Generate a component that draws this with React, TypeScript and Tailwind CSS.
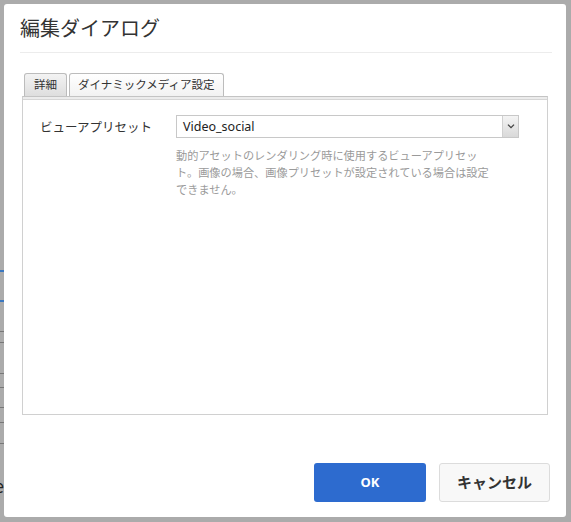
import React from "react";

const JP = { fontFamily: '"Noto Sans CJK JP", "Noto Sans", sans-serif' };

export default function App() {
  return (
    <div className="relative w-[571px] h-[522px] bg-[#ababab] overflow-hidden" style={JP}>
      {/* background page fragments peeking out on the left */}
      <div className="absolute left-0 top-[270px] w-[5px] h-[2px] bg-[#3b78c0]" />
      <div className="absolute left-0 top-[300px] w-[5px] h-[2px] bg-[#3b78c0]" />
      <div className="absolute left-0 top-[331px] w-[5px] h-px bg-[#777]" />
      <div className="absolute left-0 top-[342px] w-[5px] h-px bg-[#777]" />
      <div className="absolute left-0 top-[373px] w-[5px] h-px bg-[#777]" />
      <div className="absolute left-0 top-[387px] w-[5px] h-px bg-[#777]" />
      <div className="absolute left-0 top-[407px] w-[5px] h-px bg-[#777]" />
      <div className="absolute left-0 top-[422px] w-[5px] h-px bg-[#777]" />
      <div className="absolute left-0 top-[443px] w-[5px] h-px bg-[#777]" />
      <div className="absolute left-[-6px] top-[474px] text-[18px] leading-[22px] text-[#222]">e</div>

      {/* dialog */}
      <div className="absolute left-[4px] top-[4px] w-[562px] h-[513px] bg-white rounded-[3px] flex flex-col">
        <div className="pl-[16px] pt-[10px] text-[20px] leading-[28px] text-[#333]">編集ダイアログ</div>
        <div className="ml-[16px] mr-[14px] mt-[10px] h-px bg-[#ececec]" />

        <div className="mx-[18px] mt-[20px] flex flex-col">
          {/* tabs */}
          <div className="flex items-end gap-[2px] pl-[2px] h-[23px]">
            <div className="h-[23px] px-[9px] flex items-center text-[11.5px] text-[#333] border border-b-0 border-[#bcbcbc] rounded-t-[3px] bg-gradient-to-b from-[#f3f3f3] to-[#dedede]">
              詳細
            </div>
            <div className="h-[23px] px-[8px] flex items-center text-[11.5px] text-[#333] border border-b-0 border-[#bcbcbc] rounded-t-[3px] bg-gradient-to-b from-[#ffffff] to-[#f2f2f2]">
              ダイナミックメディア設定
            </div>
          </div>
          {/* panel */}
          <div className="h-[319px] border border-[#d0d0d0] border-t-[#c4c4c4] flex flex-col">
            <div className="h-[3px] bg-[#ececec] border-b border-[#d6d6d6]" />
            <div className="flex pt-[15px] pl-[17px]">
              <div className="w-[136px] text-[12.5px] leading-[22px] text-[#333] pt-[1px]">ビューアプリセット</div>
              <div className="flex flex-col">
                <div className="w-[343px] h-[23px] flex border border-[#c8c8c8] bg-white">
                  <div className="flex-1 pl-[6px] text-[12.5px] leading-[21px] text-[#222]" style={{ fontFamily: '"Noto Sans", "Open Sans", sans-serif' }}>
                    Video_social
                  </div>
                  <div className="w-[16px] h-full border-l border-[#d0d0d0] bg-gradient-to-b from-[#f4f4f4] to-[#d9d9d9] flex items-center justify-center">
                    <svg width="8" height="6" viewBox="0 0 8 6">
                      <path d="M0.5 1 L4 4.5 L7.5 1 L6.5 0.2 L4 2.7 L1.5 0.2 Z" fill="#444" />
                    </svg>
                  </div>
                </div>
                <div className="mt-[9px] text-[11.2px] leading-[17px] text-[#9a9a9a] whitespace-nowrap">
                  <div>動的アセットのレンダリング時に使用するビューアプリセッ</div>
                  <div>ト。画像の場合、画像プリセットが設定されている場合は設定</div>
                  <div>できません。</div>
                </div>
              </div>
            </div>
          </div>
        </div>

        <div className="flex justify-end gap-[13px] pr-[16px] mt-[48px]">
          <button className="w-[112px] h-[39px] rounded-[3px] bg-[#2d6bcf] text-white text-[13px] font-bold" style={{ fontFamily: '"Noto Sans", sans-serif' }}>
            OK
          </button>
          <button className="w-[111px] h-[39px] rounded-[3px] bg-[#f8f8f8] border border-[#dcdcdc] text-[#333] text-[15px] font-bold">
            キャンセル
          </button>
        </div>
      </div>
    </div>
  );
}
